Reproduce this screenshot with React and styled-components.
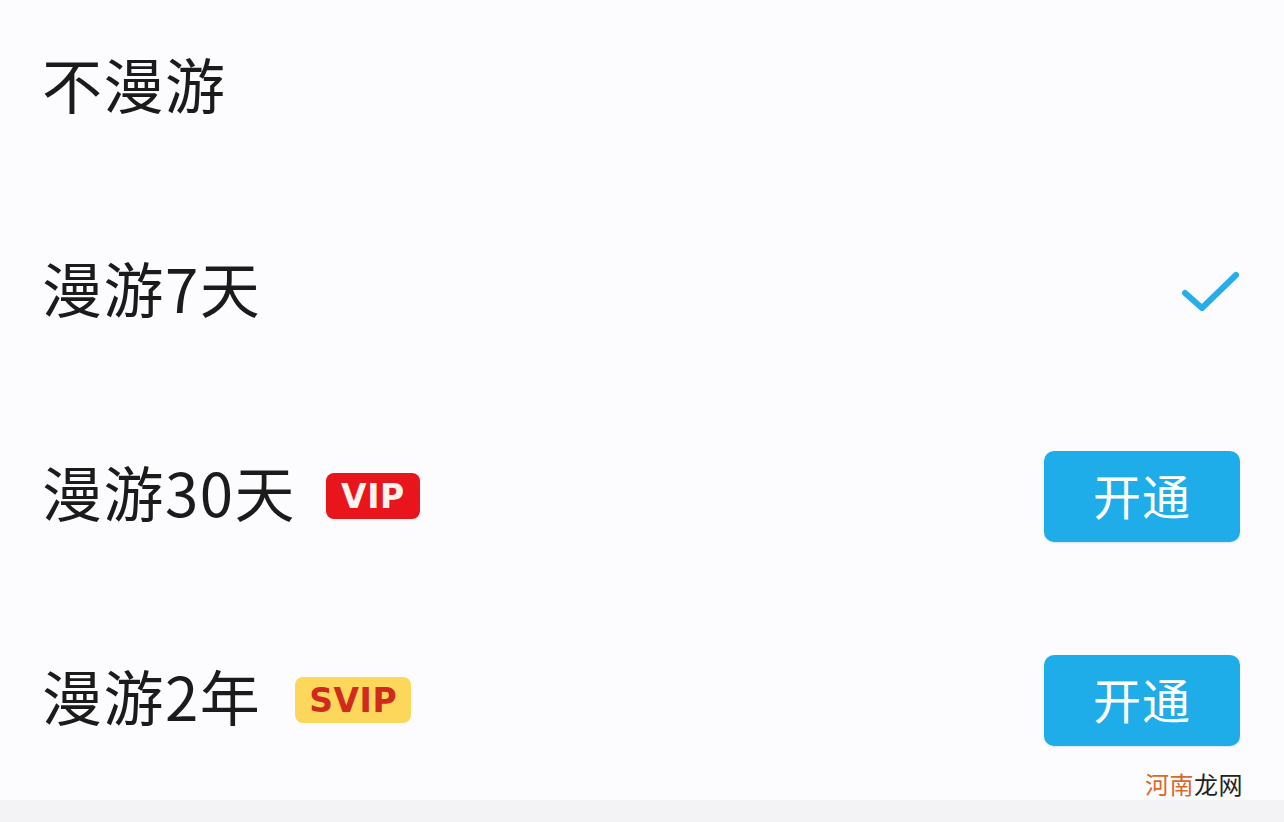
import styled, { createGlobalStyle } from 'styled-components';

const Global = createGlobalStyle`
  html, body {
    margin: 0;
    padding: 0;
    background: #fcfcfe;
  }
  body {
    font-family: "Noto Sans CJK SC", "Noto Sans", sans-serif;
  }
`;

const Page = styled.div`
  width: 1284px;
  height: 822px;
  overflow: hidden;
  position: relative;
  background: #fcfcfe;
  display: flex;
  flex-direction: column;
`;

const List = styled.div`
  margin-top: -14px;
  display: flex;
  flex-direction: column;
`;

const Row = styled.div`
  height: 204px;
  display: flex;
  align-items: center;
  padding: 0 44px 0 42px;
  box-sizing: border-box;
`;

const Label = styled.div`
  font-size: 60px;
  color: #1b1b1b;
  line-height: 1;
  letter-spacing: 1.5px;
  margin-bottom: 11px;
`;

const Badge = styled.span`
  margin-left: ${(p) => p.$gap}px;
  height: 46px;
  padding: 0 ${(p) => p.$pad}px;
  border-radius: 8px;
  display: inline-flex;
  align-items: center;
  justify-content: center;
  font-family: "DejaVu Sans", "Noto Sans", sans-serif;
  font-weight: 700;
  font-size: 33px;
  letter-spacing: 0.5px;
  background: ${(p) => (p.$kind === 'svip' ? '#fcd75c' : '#e8151c')};
  color: ${(p) => (p.$kind === 'svip' ? '#cf2a1c' : '#fff3ee')};
`;

const Spacer = styled.div`
  flex: 1;
`;

const OpenButton = styled.button`
  width: 196px;
  height: 91px;
  border: none;
  border-radius: 10px;
  background: #1fade9;
  color: #fff;
  font-family: "Noto Sans CJK SC", sans-serif;
  font-size: 48px;
  letter-spacing: 1px;
  display: flex;
  align-items: center;
  justify-content: center;
  padding: 0 0 4px;
  box-shadow: 0 1px 2px rgba(0, 80, 140, 0.15);
`;

const Check = styled.svg`
  width: 58px;
  height: 44px;
  margin-right: 1px;
`;

const Footer = styled.div`
  flex: 1;
  background: #f3f3f6;
  margin-top: -2px;
`;

const Watermark = styled.div`
  position: absolute;
  right: 41px;
  bottom: 21px;
  font-size: 24px;
  font-family: "Noto Sans CJK SC", sans-serif;
  color: #222;
  letter-spacing: 0.5px;
  span {
    color: #d9692a;
  }
`;

const rows = [
  { label: '不漫游' },
  { label: '漫游7天', checked: true },
  { label: '漫游30天', badge: 'VIP', kind: 'vip', gap: 30, pad: 15 },
  { label: '漫游2年', badge: 'SVIP', kind: 'svip', gap: 34, pad: 14 },
];

export default function App() {
  return (
    <Page>
      <Global />
      <List>
        {rows.map((r) => (
          <Row key={r.label}>
            <Label>{r.label}</Label>
            {r.badge && (
              <Badge $kind={r.kind} $gap={r.gap} $pad={r.pad}>
                {r.badge}
              </Badge>
            )}
            <Spacer />
            {r.checked && (
              <Check viewBox="0 0 58 44">
                <path d="M4 23 L21 38 L55 5" fill="none" stroke="#27ade8" strokeWidth="6" strokeLinecap="round" strokeLinejoin="round" />
              </Check>
            )}
            {r.badge && <OpenButton>开通</OpenButton>}
          </Row>
        ))}
      </List>
      <Footer />
      <Watermark>
        <span>河南</span>龙网
      </Watermark>
    </Page>
  );
}
